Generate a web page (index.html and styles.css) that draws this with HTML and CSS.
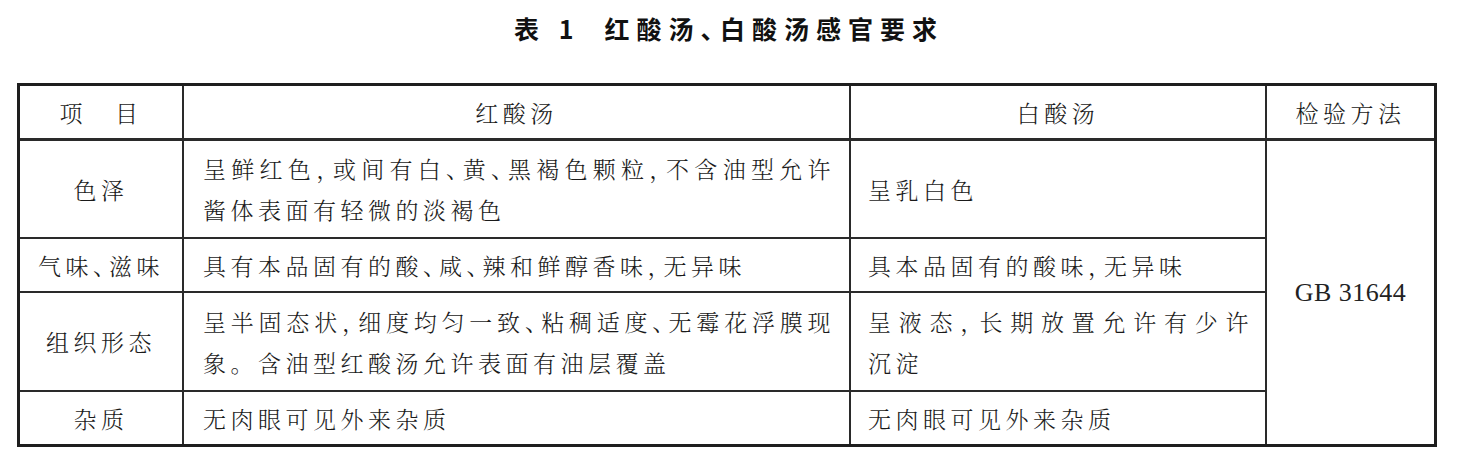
FILE: index.html
```html
<!DOCTYPE html>
<html lang="zh-CN">
<head>
<meta charset="utf-8">
<title>表 1 红酸汤、白酸汤感官要求</title>
<link rel="stylesheet" href="styles.css">
</head>
<body>
<div class="caption">表 1<span class="cap-gap"></span>红酸汤、白酸汤感官要求</div>
<table class="spec">
  <colgroup>
    <col class="c1">
    <col class="c2">
    <col class="c3">
    <col class="c4">
  </colgroup>
  <thead>
    <tr class="rh">
      <th class="cat">项<span class="gap"></span>目</th>
      <th class="hc">红酸汤</th>
      <th class="hc">白酸汤</th>
      <th class="hc last">检验方法</th>
    </tr>
  </thead>
  <tbody>
    <tr class="r1">
      <td class="cat">色泽</td>
      <td class="desc red"><span class="ln j">呈鲜红色，或间有白、黄、黑褐色颗粒，不含油型允许</span><span class="ln">酱体表面有轻微的淡褐色</span></td>
      <td class="desc white">呈乳白色</td>
      <td class="method last" rowspan="4">GB 31644</td>
    </tr>
    <tr class="r2">
      <td class="cat">气味、滋味</td>
      <td class="desc red">具有本品固有的酸、咸、辣和鲜醇香味，无异味</td>
      <td class="desc white">具本品固有的酸味，无异味</td>
    </tr>
    <tr class="r3">
      <td class="cat">组织形态</td>
      <td class="desc red"><span class="ln j">呈半固态状，细度均匀一致、粘稠适度、无霉花浮膜现</span><span class="ln">象<span class="fw">。</span>含油型红酸汤允许表面有油层覆盖</span></td>
      <td class="desc white"><span class="ln j">呈液态，长期放置允许有少许</span><span class="ln">沉淀</span></td>
    </tr>
    <tr class="r4">
      <td class="cat">杂质</td>
      <td class="desc red">无肉眼可见外来杂质</td>
      <td class="desc white">无肉眼可见外来杂质</td>
    </tr>
  </tbody>
</table>
</body>
</html>
```
FILE: styles.css
```css
html, body {
  margin: 0;
  padding: 0;
  background: #ffffff;
}

body {
  color: #1a1a1a;
  font-family: "Noto Serif CJK SC", "Noto Sans CJK SC", sans-serif;
  font-feature-settings: "halt";
}

.caption {
  padding-top: 10px;
  height: 37px;
  line-height: 37px;
  margin-bottom: 36px;
  text-align: center;
  font-family: "Noto Sans CJK SC", sans-serif;
  font-weight: 700;
  font-size: 25px;
  letter-spacing: 7px;
  color: #111;
}

.cap-gap {
  display: inline-block;
  width: 24px;
}

.spec {
  margin-left: 17px;
  width: 1420px;
  box-sizing: border-box;
  table-layout: fixed;
  border-collapse: separate;
  border-spacing: 0;
  border: 3px solid #1e1e1e;
  font-size: 23px;
  letter-spacing: 4.5px;
  font-weight: 300;
}

.c1 { width: 164px; }
.c2 { width: 667px; }
.c3 { width: 416px; }
.c4 { width: 167px; }

.spec th,
.spec td {
  padding: 0;
  border-right: 2px solid #2a2a2a;
  border-bottom: 2px solid #2a2a2a;
  vertical-align: middle;
  font-weight: 300;
  line-height: 41px;
}

.spec th {
  border-bottom-width: 3px;
  text-align: center;
}

.spec .last {
  border-right: none;
}

.spec tbody tr:last-child td,
.spec .method {
  border-bottom: none;
}

.rh { height: 55px; }
.r1 { height: 98px; }
.r2 { height: 54px; }
.r3 { height: 99px; }
.r4 { height: 52px; }

.hc {
  padding-left: 5px;
}

.gap {
  display: inline-block;
  width: 28px;
}

.cat {
  text-align: center;
  padding-left: 5px;
}

.spec td.desc {
  text-align: left;
}

.spec td.red {
  padding-left: 19px;
  padding-right: 14px;
}

.spec td.white {
  padding-left: 17px;
  padding-right: 12px;
}

.ln {
  display: block;
}

.ln.j {
  text-align: justify;
  text-align-last: justify;
}

.fw {
  font-feature-settings: normal;
}

.spec .method {
  text-align: center;
  font-family: "Liberation Serif", "Times New Roman", "DejaVu Serif", serif;
  font-size: 26px;
  letter-spacing: 0.5px;
  font-weight: 400;
  color: #222;
}
```
